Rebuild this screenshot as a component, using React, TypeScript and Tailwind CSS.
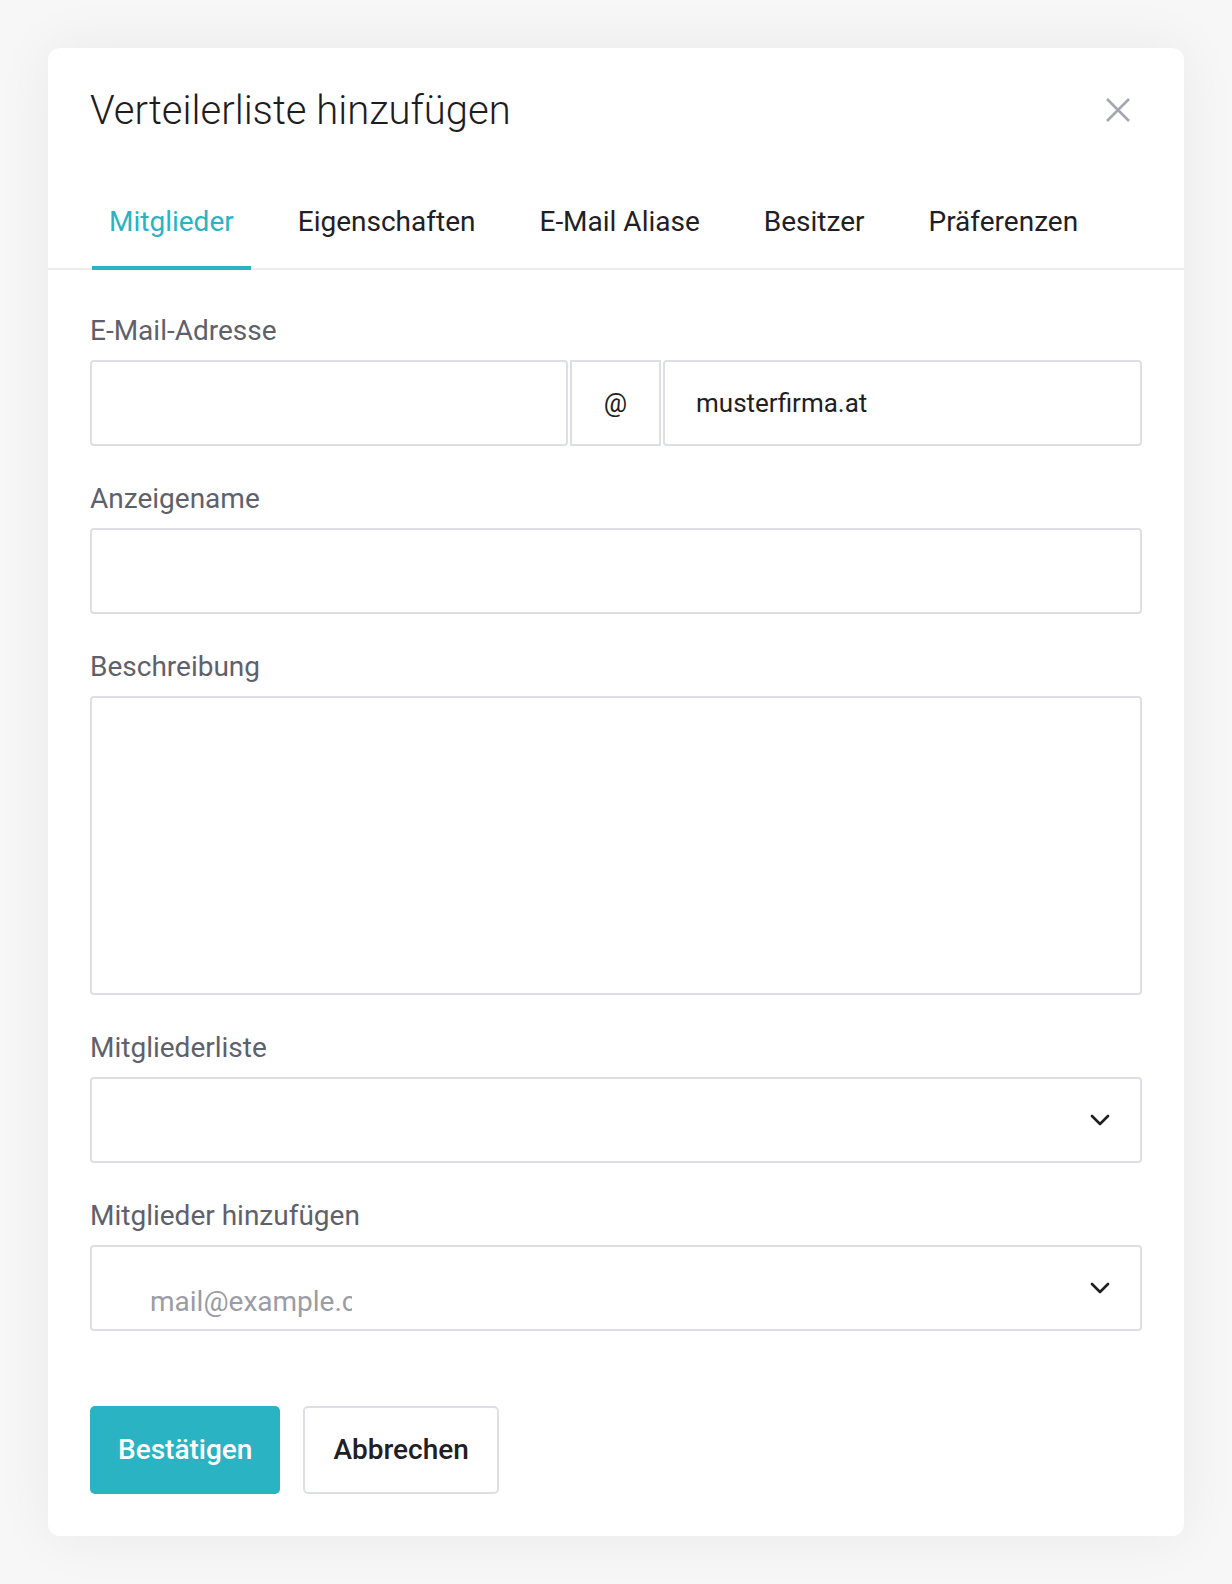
import React from "react";

const tabs = ["Mitglieder", "Eigenschaften", "E-Mail Aliase", "Besitzer", "Präferenzen"];

const font = { fontFamily: "Roboto, 'Noto Sans', sans-serif" };

function Label({ children }: { children: React.ReactNode }) {
  return (
    <div className="text-[28px] leading-[34px] text-[#5e616c] mb-[12px]">{children}</div>
  );
}

function Chevron() {
  return (
    <svg width="20" height="12" viewBox="0 0 20 12" fill="none" className="shrink-0">
      <path d="M2 2 L10 10 L18 2" stroke="#1f2024" strokeWidth="2.6" strokeLinecap="round" strokeLinejoin="round" />
    </svg>
  );
}

export default function App() {
  return (
    <div className="min-h-screen bg-[#f7f7f7] p-[48px]" style={font}>
      <div className="bg-white rounded-[12px] shadow-[0_0_60px_rgba(0,0,0,0.06)] pb-[42px]">
        {/* header */}
        <div className="flex items-start justify-between pl-[42px] pr-[53px] pt-[39px]">
          <h1 className="text-[40px] leading-[48px] font-light text-[#1d1d1f]">
            Verteilerliste hinzufügen
          </h1>
          <button className="mt-[10px]" aria-label="close">
            <svg width="26" height="26" viewBox="0 0 26 26" fill="none">
              <path d="M2 2 L24 24 M24 2 L2 24" stroke="#a4a7b2" strokeWidth="2.6" />
            </svg>
          </button>
        </div>

        {/* tabs */}
        <div className="mt-[71px] flex gap-[30px] border-b-2 border-[#ececee] px-[44px]">
          {tabs.map((t, i) => (
            <div
              key={t}
              className={
                "relative px-[17px] pb-[30px] text-[28px] leading-[32px] " +
                (i === 0 ? "text-[#29b3c3]" : "text-[#1f2024]")
              }
            >
              {t}
              {i === 0 && (
                <span className="absolute left-0 right-0 bottom-[-2px] h-[4px] bg-[#29b3c3]" />
              )}
            </div>
          ))}
        </div>

        {/* form */}
        <div className="px-[42px] pt-[44px] flex flex-col gap-[36px]">
          <div>
            <Label>E-Mail-Adresse</Label>
            <div className="grid grid-cols-[478px_91px_1fr] gap-[2px] h-[86px]">
              <div className="border-2 border-[#dedfe4] rounded-[4px]" />
              <div className="border-2 border-[#dedfe4] flex items-center justify-center text-[26px] text-[#1f2024]">
                @
              </div>
              <div className="border-2 border-[#dedfe4] rounded-[4px] flex items-center pl-[31px] text-[26px] text-[#1f2024]">
                musterfirma.at
              </div>
            </div>
          </div>

          <div>
            <Label>Anzeigename</Label>
            <div className="h-[86px] border-2 border-[#dedfe4] rounded-[4px]" />
          </div>

          <div>
            <Label>Beschreibung</Label>
            <div className="h-[299px] border-2 border-[#dedfe4] rounded-[4px]" />
          </div>

          <div>
            <Label>Mitgliederliste</Label>
            <div className="h-[86px] border-2 border-[#dedfe4] rounded-[4px] flex items-center justify-end pr-[30px]">
              <Chevron />
            </div>
          </div>

          <div>
            <Label>Mitglieder hinzufügen</Label>
            <div className="h-[86px] border-2 border-[#dedfe4] rounded-[4px] flex items-center justify-between pr-[30px]">
              <div className="self-start pl-[58px] pt-[39px]">
                <div className="w-[202px] overflow-hidden whitespace-nowrap text-[28px] leading-[32px] text-[#9a9ca6]">
                  mail@example.com
                </div>
              </div>
              <Chevron />
            </div>
          </div>

          <div className="flex gap-[23px] mt-[39px]">
            <button className="h-[88px] px-[28px] rounded-[5px] bg-[#29b3c3] text-white text-[28px] font-medium">
              Bestätigen
            </button>
            <button className="h-[88px] px-[28px] rounded-[5px] border-2 border-[#dedfe4] bg-white text-[#1f2024] text-[28px] font-medium">
              Abbrechen
            </button>
          </div>
        </div>
      </div>
    </div>
  );
}
